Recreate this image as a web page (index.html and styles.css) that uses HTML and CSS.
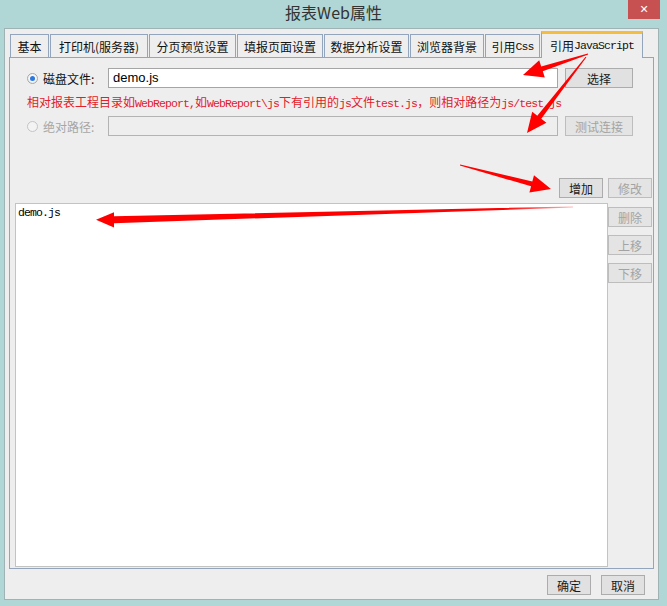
FILE: index.html
```html
<!DOCTYPE html>
<html lang="zh">
<head>
<meta charset="utf-8">
<title>报表Web属性</title>
<link rel="stylesheet" href="styles.css">
</head>
<body>
<div class="window">
  <div class="titlebar">
    <span class="title">报表Web属性</span>
    <span class="close">✕</span>
  </div>
  <div class="frame">
    <div class="tabs">
      <div class="tab t1">基本</div>
      <div class="tab t2">打印机(服务器)</div>
      <div class="tab t3">分页预览设置</div>
      <div class="tab t4">填报页面设置</div>
      <div class="tab t5">数据分析设置</div>
      <div class="tab t6">浏览器背景</div>
      <div class="tab t7">引用<span class="mono">Css</span></div>
      <div class="tab t8 active">引用<span class="mono">JavaScript</span></div>
    </div>
    <div class="panel">
      <div class="row">
        <div class="opt"><span class="radio checked"></span><span>磁盘文件:</span></div>
        <div class="field">demo.js</div>
        <button class="btn btn-wide">选择</button>
      </div>
      <div class="hint">相对报表工程目录如<span class="mono">WebReport,</span>如<span class="mono">WebReport\js</span>下有引用的<span class="mono">js</span>文件<span class="mono">test.js</span>，则相对路径为<span class="mono">js/test.js</span></div>
      <div class="row">
        <div class="opt disabled"><span class="radio"></span><span>绝对路径:</span></div>
        <div class="field field-disabled"></div>
        <button class="btn btn-wide" disabled>测试连接</button>
      </div>
      <div class="actions">
        <button class="btn">增加</button>
        <button class="btn" disabled>修改</button>
      </div>
      <div class="list-area">
        <div class="list">
          <div class="list-item mono">demo.js</div>
        </div>
        <div class="side">
          <button class="btn" disabled>删除</button>
          <button class="btn" disabled>上移</button>
          <button class="btn" disabled>下移</button>
        </div>
      </div>
    </div>
    <div class="footer">
      <button class="btn">确定</button>
      <button class="btn">取消</button>
    </div>
  </div>
  <svg class="arrows" width="667" height="606" viewBox="0 0 667 606" xmlns="http://www.w3.org/2000/svg">
    <defs>
      <linearGradient id="fade" x1="96" y1="0" x2="575" y2="0" gradientUnits="userSpaceOnUse">
        <stop offset="0" stop-color="#ff0000"/>
        <stop offset="0.85" stop-color="#ff0000"/>
        <stop offset="1" stop-color="#ff0000" stop-opacity="0.25"/>
      </linearGradient>
    </defs>
    <polygon fill="#ff0000" points="587.8,53.5 541.2,66.5 539.2,60.3 523,75 544.8,77.5 542.8,71.3 588.2,54.5"/>
    <polygon fill="#ff0000" points="585.6,56.7 537.3,115.7 532.2,111.7 527,133 546.4,122.7 541.3,118.7 586.4,57.3"/>
    <polygon fill="#ff0000" points="460.1,164.5 532.3,181.5 534.0,175.2 551,189 529.4,192.6 531.1,186.3 459.9,165.5"/>
    <polygon fill="url(#fade)" points="573,206.4 114,216.2 114,212.2 96,219.8 114,227.4 114,223.2 573,207.6"/>
  </svg>
</div>
</body>
</html>
```

FILE: styles.css
```css
* { box-sizing: border-box; }

html, body {
  margin: 0;
  padding: 0;
}

body {
  width: 667px;
  height: 606px;
  overflow: hidden;
  background: #b0d6d6;
  font-family: "Noto Sans CJK SC", "Liberation Sans", sans-serif;
  font-size: 12px;
  color: #1a1a1a;
}

.window {
  position: relative;
  width: 667px;
  height: 606px;
}

.titlebar {
  height: 28px;
  display: flex;
  justify-content: center;
}

.title {
  font-size: 16px;
  line-height: 24px;
  color: #333;
}

.close {
  position: absolute;
  top: 0;
  right: 7px;
  width: 32px;
  height: 19px;
  background: #c75050;
  color: #fff;
  font-size: 11px;
  font-weight: bold;
  line-height: 19px;
  text-align: center;
  font-family: "DejaVu Sans", sans-serif;
}

.frame {
  margin-left: 4px;
  width: 655px;
  height: 572px;
  border: 1px solid #9fb3b4;
  background: #eeeeee;
  padding-top: 2px;
}

.mono {
  font-family: "Liberation Mono", "DejaVu Sans Mono", monospace;
  font-size: 11.5px;
  letter-spacing: -0.9px;
}

/* tabs */
.tabs {
  position: relative;
  z-index: 2;
  display: flex;
  align-items: flex-end;
  gap: 1px;
  height: 26px;
  padding-left: 5px;
}

.tab {
  height: 23px;
  border: 1px solid #93a5bd;
  border-bottom: none;
  background: #eeeeee;
  display: flex;
  align-items: center;
  justify-content: center;
  white-space: nowrap;
  font-size: 12px;
  color: #111;
  padding-top: 1px;
}

.tab.active {
  height: 27px;
  margin-bottom: -1px;
  border-top: 3px solid #f3bd3f;
  padding-top: 0;
  padding-bottom: 2px;
}

.t1 { width: 39px; }
.t2 { width: 98px; }
.t3 { width: 87px; }
.t4 { width: 86px; }
.t5 { width: 85px; }
.t6 { width: 74px; }
.t7 { width: 55px; }
.t8 { width: 102px; }

/* panel */
.panel {
  position: relative;
  z-index: 1;
  margin-left: 4px;
  width: 645px;
  height: 512px;
  border: 1px solid #93a5bd;
  padding-top: 10px;
}

.row {
  display: flex;
  align-items: center;
  height: 20px;
  padding-left: 17px;
}

.opt {
  width: 81px;
  display: flex;
  align-items: center;
  gap: 5px;
  color: #111;
  font-size: 12px;
}

.opt.disabled { color: #a6a6a6; }

.radio {
  width: 11px;
  height: 11px;
  border-radius: 50%;
  border: 1px solid #a8a8a8;
  background: radial-gradient(circle at 50% 40%, #ffffff 0%, #f2f2f2 60%, #dcdcdc 100%);
  display: flex;
  align-items: center;
  justify-content: center;
}

.radio.checked::after {
  content: "";
  width: 5px;
  height: 5px;
  border-radius: 50%;
  background: #2e78dc;
}

.opt.disabled .radio {
  border-color: #c4c4c4;
  background: #f3f3f3;
}

.field {
  width: 450px;
  height: 20px;
  border: 1px solid #a5a5a5;
  background: #ffffff;
  margin-right: 7px;
  padding-left: 4px;
  font-family: "Liberation Sans", Arial, sans-serif;
  font-size: 13px;
  line-height: 18px;
  color: #000;
}

.field-disabled {
  background: #eeeeee;
  border-color: #b3b3b3;
}

.hint {
  height: 28px;
  line-height: 28px;
  padding-left: 17px;
  color: #e2202a;
  font-size: 12px;
  white-space: nowrap;
}

.btn {
  width: 44px;
  height: 20px;
  padding: 0;
  border: 1px solid #acacac;
  background: #e1e1e1;
  font-family: "Noto Sans CJK SC", sans-serif;
  font-size: 12px;
  line-height: 17px;
  color: #1a1a1a;
  cursor: default;
}

.btn:disabled {
  color: #a3a3a3;
  border-color: #bdbdbd;
  background: #e4e4e4;
}

.btn-wide { width: 68px; }

.actions {
  display: flex;
  justify-content: flex-end;
  gap: 5px;
  margin-top: 42px;
  padding-right: 1px;
}

.list-area {
  display: flex;
  margin-top: 5px;
}

.list {
  margin-left: 5px;
  width: 593px;
  height: 364px;
  border: 1px solid #c3c3c0;
  background: #ffffff;
}

.list-item {
  padding: 2px 0 0 2px;
  line-height: 14px;
  color: #000;
}

.side {
  width: 44px;
  padding-top: 4px;
  display: flex;
  flex-direction: column;
  gap: 8px;
}

.footer {
  display: flex;
  justify-content: flex-end;
  gap: 10px;
  margin-top: 6px;
  padding-right: 13px;
}

.arrows {
  position: absolute;
  top: 0;
  left: 0;
  pointer-events: none;
  z-index: 10;
}
```
